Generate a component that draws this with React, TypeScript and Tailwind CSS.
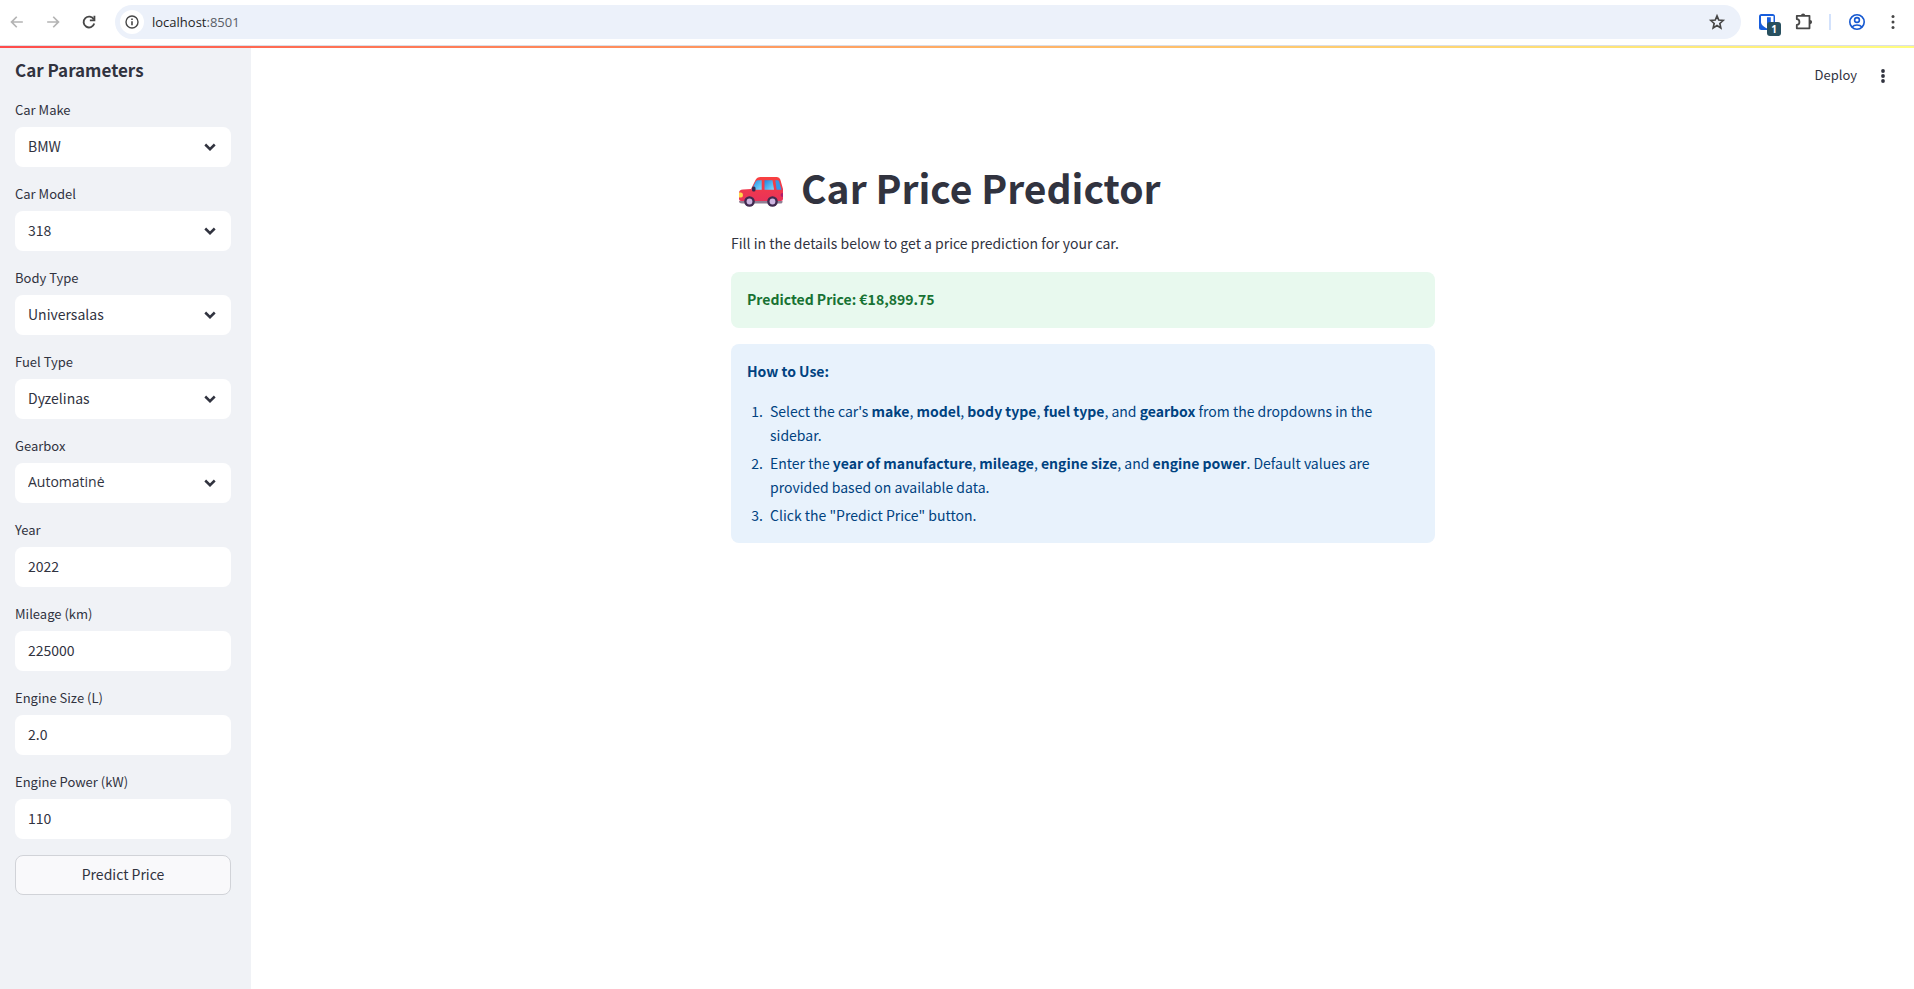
import { useState, type ReactNode } from "react";

const selects = [
  { id: "make", label: "Car Make", options: ["BMW", "Audi", "Volvo"] },
  { id: "model", label: "Car Model", options: ["318", "320", "520"] },
  { id: "body", label: "Body Type", options: ["Universalas", "Sedanas"] },
  { id: "fuel", label: "Fuel Type", options: ["Dyzelinas", "Benzinas"] },
  { id: "gearbox", label: "Gearbox", options: ["Automatinė", "Mechaninė"] },
];

const inputs = [
  { id: "year", label: "Year", value: "2022" },
  { id: "mileage", label: "Mileage (km)", value: "225000" },
  { id: "engine-size", label: "Engine Size (L)", value: "2.0" },
  { id: "engine-power", label: "Engine Power (kW)", value: "110" },
];

const controlClass =
  "h-10 w-full appearance-none rounded-lg bg-white px-[13px] pb-[2px] text-[14px] leading-6 text-[#31333f] outline-none";

function Field({ id, label, children }: { id: string; label: string; children: ReactNode }) {
  return (
    <div className="flex flex-col gap-1">
      <label htmlFor={id} className="pb-[2px] text-[13px] leading-[22px]">
        {label}
      </label>
      {children}
    </div>
  );
}

function SelectField({ id, label, options }: { id: string; label: string; options: string[] }) {
  const [value, setValue] = useState(options[0]);
  // The main font has no precomposed "ė", so such values use one that has it.
  const family = value.includes("ė") ? "font-['Open_Sans',sans-serif]" : "";
  return (
    <Field id={id} label={label}>
      <div className="relative">
        <select
          id={id}
          value={value}
          onChange={(e) => setValue(e.target.value)}
          className={`${controlClass} ${family}`}
        >
          {options.map((o) => (
            <option key={o}>{o}</option>
          ))}
        </select>
        <svg
          viewBox="0 0 24 24"
          className="pointer-events-none absolute top-[10px] right-[11px] size-5 fill-none stroke-[#31333f]"
          strokeWidth="3"
        >
          <path d="M6.300 9 L12 14.600 L17.700 9" />
        </svg>
      </div>
    </Field>
  );
}

function InputField({ id, label, value }: { id: string; label: string; value: string }) {
  const [current, setCurrent] = useState(value);
  return (
    <Field id={id} label={label}>
      <input
        id={id}
        inputMode="decimal"
        value={current}
        onChange={(e) => setCurrent(e.target.value)}
        className={controlClass}
      />
    </Field>
  );
}

function BrowserBar() {
  return (
    <header className="flex h-[46px] shrink-0 items-center border-b border-[#dcdfe6] bg-white pb-px text-[#474747]">
      <nav className="flex items-center gap-4 pl-[7px]">
        <button aria-label="Back" className="size-5 text-[#b4b4b4]">
          <svg viewBox="0 0 24 24" className="size-5 fill-current">
            <path d="M19 11H7.83l4.59-4.59L11 5l-7 7 7 7 1.410-1.410L7.83 13H19v-2z" />
          </svg>
        </button>
        <button aria-label="Forward" className="size-5 text-[#b4b4b4]">
          <svg viewBox="0 0 24 24" className="size-5 fill-current">
            <path d="M13 5l-1.410 1.410L16.170 11H5v2h11.170l-4.580 4.590L13 19l7-7z" />
          </svg>
        </button>
        <button aria-label="Reload" className="size-5">
          <svg viewBox="0 0 24 24" className="size-5 fill-none stroke-current" strokeWidth="2.2">
            <path d="M17.800 9 A6.500 6.500 0 1 0 18.300 13.800" />
            <path d="M18.500 4.500 V10 H13" />
          </svg>
        </button>
      </nav>
      <div className="ml-4 flex h-[34px] flex-1 items-center rounded-full bg-[#ecf1fa] pr-[14px] pl-[5px]">
        <button aria-label="Site information" className="flex size-6 items-center justify-center rounded-full bg-white">
          <svg viewBox="0 0 16 16" className="size-4 fill-none stroke-current" strokeWidth="1.4">
            <circle cx="8" cy="8" r="6" />
            <path d="M8 7.2 V11.2 M8 4.6 V6" strokeWidth="1.6" />
          </svg>
        </button>
        <div
          role="textbox"
          aria-label="Address"
          className="flex-1 pl-2 font-['Open_Sans',sans-serif] text-[13px] leading-5 text-[#1f1f1f]"
        >
          localhost<span className="text-[#5a5e66]">:8501</span>
        </div>
        <button aria-label="Bookmark" className="size-5">
          <svg viewBox="0 0 24 24" className="size-5 fill-none stroke-current" strokeWidth="2">
            <path d="M12 4.6 L14.1 9.700 L19.400 10.200 L15.400 13.800 L16.600 19.100 L12 16.300 L7.400 19.100 L8.600 13.800 L4.600 10.200 L9.900 9.700 Z" />
          </svg>
        </button>
      </div>
      <div className="flex items-center pl-[15px]">
        <button aria-label="Password manager" className="relative size-6">
          <svg viewBox="0 0 24 24" className="size-6">
            <rect x="3" y="4" width="16" height="16" rx="2.500" fill="#175ddc" />
            <path d="M5 6 H17.500 V12 C17.500 15 14 17 11.200 18.500 C8 17 5 15 5 12 Z" fill="#fff" />
            <path d="M11 7.300 H14.800 V12 C14.800 13.500 13 14.500 11 15.300 Z" fill="#175ddc" />
          </svg>
          <span className="absolute top-[12px] left-[11px] flex h-[14px] w-[14px] items-center justify-center rounded-[3px] bg-[#28505f] font-['Open_Sans',sans-serif] text-[10px] leading-3 font-bold text-white">
            1
          </span>
        </button>
        <button aria-label="Extensions" className="ml-3 size-6">
          <svg viewBox="0 0 24 24" className="size-6 fill-none stroke-current" strokeWidth="1.800">
            <path d="M4.800 5.800 H17.500 V18.300 H4.800 V15 C8.300 14.800 8.300 9.300 4.800 9.100 Z" strokeLinejoin="round" />
            <path d="M9 5.500 A2.100 2.100 0 0 1 13.200 5.500 Z M18 10 A2.100 2.100 0 0 1 18 14.200 Z" fill="currentColor" stroke="none" />
          </svg>
        </button>
        <span className="ml-[13px] h-4 w-[2px] bg-[#d3e2fc]" />
        <button aria-label="Profile" className="ml-[16px] size-5">
          <svg viewBox="0 0 20 20" className="size-5 fill-none stroke-[#1558d0]" strokeWidth="1.600">
            <circle cx="10" cy="10" r="7.200" />
            <circle cx="10" cy="8" r="2.400" />
            <path d="M5 15 C7.500 12.400 12.500 12.400 15 15" />
          </svg>
        </button>
        <button aria-label="Browser menu" className="mr-[11px] ml-[16px] size-5">
          <svg viewBox="0 0 20 20" className="size-5 fill-current">
            <circle cx="10" cy="4.500" r="1.500" />
            <circle cx="10" cy="10" r="1.500" />
            <circle cx="10" cy="15.500" r="1.500" />
          </svg>
        </button>
      </div>
    </header>
  );
}

function CarIcon() {
  return (
    <svg viewBox="0 0 46 34" className="mt-[10px] h-[34px] w-[46px]" role="img" aria-label="Car">
      <defs>
        <linearGradient id="glass" x1="0" y1="0" x2="1" y2="1">
          <stop offset="0" stopColor="#1f86e0" />
          <stop offset="1" stopColor="#7fdcff" />
        </linearGradient>
        <linearGradient id="paint" x1="0" y1="0" x2="0" y2="1">
          <stop offset="0" stopColor="#f8403f" />
          <stop offset="1" stopColor="#e8325a" />
        </linearGradient>
      </defs>
      <path d="M1 26 H44.500 V27 Q44.500 28.500 42.500 28.500 H4 Q1 28.500 1 26 Z" fill="#8f7f94" />
      <path
        d="M13 14 L17.500 5 Q19 2 22.500 2 H39 Q41.500 2 42.300 4.500 L45 14 V24 Q45 26 43 26 H3 Q1 26 1 24 V18 Q1 14.500 5 14.500 Z"
        fill="url(#paint)"
      />
      <path d="M13.500 14.700 L17.800 6.500 Q18.500 5.200 20 5.200 H23.700 V14.700 Z" fill="url(#glass)" />
      <path d="M26.500 5.200 H34.500 L36 14.700 H26.500 Z" fill="url(#glass)" />
      <path d="M37.300 5.200 H39.500 Q40.700 5.200 41.100 6.500 L43.500 14.700 H38.600 Z" fill="#3697e8" />
      <path d="M1 17.500 H3 Q5 17.500 5 20 Q5 22.500 3 22.500 H1 Z" fill="#ffd84a" />
      <path d="M45 18 Q42.500 18 42.500 20 Q42.500 22 45 22 Z" fill="#b01d6c" />
      <rect x="14" y="11.500" width="3.500" height="5" rx="1.500" fill="#37284d" />
      <circle cx="11.500" cy="26.500" r="5.300" fill="#402a4f" />
      <circle cx="11.500" cy="26.500" r="2.900" fill="#cdb5e0" />
      <circle cx="34.500" cy="26.500" r="5.300" fill="#402a4f" />
      <circle cx="34.500" cy="26.500" r="2.900" fill="#cdb5e0" />
    </svg>
  );
}

export default function App() {
  return (
    <div className="flex min-h-screen flex-col bg-white font-['Noto_Sans_CJK_SC','Noto_Sans',sans-serif] text-[#31333f]">
      <BrowserBar />
      <div className="h-[2px] shrink-0 bg-linear-to-r from-[#ff4b4b] to-[#fffd80]" />
      <div className="flex flex-1">
        <aside className="w-[251px] shrink-0 bg-[#f0f2f6] pt-2 pr-5 pb-4 pl-[15px]">
          <h2 className="pb-[15px] text-[17px] leading-7 font-bold">Car Parameters</h2>
          <form className="flex flex-col gap-4" onSubmit={(e) => e.preventDefault()}>
            {selects.map((s) => (
              <SelectField key={s.id} {...s} />
            ))}
            {inputs.map((f) => (
              <InputField key={f.id} {...f} />
            ))}
            <button className="h-10 w-full rounded-lg border border-[#d1d3d8] bg-[#f9f9fb] pb-[2px] text-[14px] leading-6">
              Predict Price
            </button>
          </form>
        </aside>
        <main className="flex-1 pl-px">
          <div className="flex h-14 items-center justify-end gap-[16px] pr-[21px]">
            <button className="pb-[2px] text-[13px] leading-5">Deploy</button>
            <button aria-label="App menu" className="size-5">
              <svg viewBox="0 0 20 20" className="size-5 fill-current">
                <circle cx="10" cy="5" r="1.900" />
                <circle cx="10" cy="10" r="1.900" />
                <circle cx="10" cy="15" r="1.900" />
              </svg>
            </button>
          </div>
          <div className="mx-auto max-w-[704px] pt-[55px]">
            <h1 className="flex items-center gap-[17px] pl-[7px] text-[39px] leading-[56px] font-bold">
              <CarIcon />
              Car Price Predictor
            </h1>
            <p className="pt-4 text-[14px] leading-6">
              Fill in the details below to get a price prediction for your car.
            </p>
            <div className="mt-[17px] rounded-lg bg-[#e8f9ee] px-4 pt-[15px] pb-[17px] text-[14px] leading-6 font-bold text-[#177233]">
              Predicted Price: €18,899.75
            </div>
            <section className="mt-4 rounded-lg bg-[#e8f2fc] px-4 pt-[15px] pb-4 text-[14px] leading-6 text-[#004280]">
              <p className="font-bold">How to Use:</p>
              <ol className="mt-4 flex list-decimal flex-col gap-1 pl-[19px] *:pl-1">
                <li>
                  Select the car's <b>make</b>, <b>model</b>, <b>body type</b>, <b>fuel type</b>, and <b>gearbox</b> from
                  the dropdowns in the sidebar.
                </li>
                <li>
                  Enter the <b>year of manufacture</b>, <b>mileage</b>, <b>engine size</b>, and <b>engine power</b>.
                  Default values are provided based on available data.
                </li>
                <li>Click the "Predict Price" button.</li>
              </ol>
            </section>
          </div>
        </main>
      </div>
    </div>
  );
}
